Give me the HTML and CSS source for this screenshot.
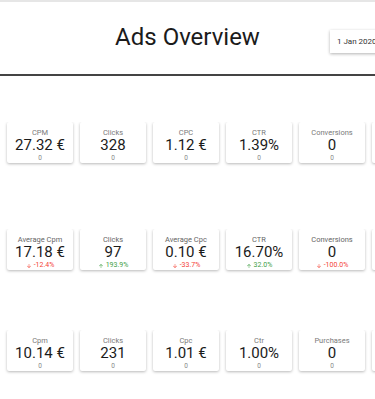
FILE: index.html
```html
<!DOCTYPE html>
<html lang="en">
<head>
    <meta charset="UTF-8">
    <meta name="viewport" content="width=device-width, initial-scale=1.0">
    <title>Ads Overview</title>
    <link rel="stylesheet" href="styles.css">
</head>
<body>
    <div class="header">
        <div></div>
        <h1 class="title">Ads Overview</h1>
        <div class="datecol">
            <div class="datebox">1 Jan 2020</div>
        </div>
    </div>

    <!-- 总览 -->
    <div class="row first">
        <div class="card"><span class="label">CPM</span><span class="value">27.32 €</span><span class="sub">0</span></div>
        <div class="card"><span class="label">Clicks</span><span class="value">328</span><span class="sub">0</span></div>
        <div class="card"><span class="label">CPC</span><span class="value">1.12 €</span><span class="sub">0</span></div>
        <div class="card"><span class="label">CTR</span><span class="value">1.39%</span><span class="sub">0</span></div>
        <div class="card"><span class="label">Conversions</span><span class="value">0</span><span class="sub">0</span></div>
        <div class="card"></div>
    </div>

    <!-- 对比 -->
    <div class="row second">
        <div class="card"><span class="label">Average Cpm</span><span class="value">17.18 €</span><span class="sub down"><svg viewBox="0 0 24 24"><path d="M20 12l-1.41-1.41L13 16.17V4h-2v12.17l-5.58-5.59L4 12l8 8 8-8z"/></svg>-12.4%</span></div>
        <div class="card"><span class="label">Clicks</span><span class="value">97</span><span class="sub up"><svg viewBox="0 0 24 24"><path d="M4 12l1.41 1.41L11 7.83V20h2V7.83l5.58 5.59L20 12l-8-8-8 8z"/></svg>193.9%</span></div>
        <div class="card"><span class="label">Average Cpc</span><span class="value">0.10 €</span><span class="sub down"><svg viewBox="0 0 24 24"><path d="M20 12l-1.41-1.41L13 16.17V4h-2v12.17l-5.58-5.59L4 12l8 8 8-8z"/></svg>-33.7%</span></div>
        <div class="card"><span class="label">CTR</span><span class="value">16.70%</span><span class="sub up"><svg viewBox="0 0 24 24"><path d="M4 12l1.41 1.41L11 7.83V20h2V7.83l5.58 5.59L20 12l-8-8-8 8z"/></svg>32.0%</span></div>
        <div class="card"><span class="label">Conversions</span><span class="value">0</span><span class="sub down"><svg viewBox="0 0 24 24"><path d="M20 12l-1.41-1.41L13 16.17V4h-2v12.17l-5.58-5.59L4 12l8 8 8-8z"/></svg>-100.0%</span></div>
        <div class="card"></div>
    </div>

    <!-- 明细 -->
    <div class="row third">
        <div class="card"><span class="label">Cpm</span><span class="value">10.14 €</span><span class="sub">0</span></div>
        <div class="card"><span class="label">Clicks</span><span class="value">231</span><span class="sub">0</span></div>
        <div class="card"><span class="label">Cpc</span><span class="value">1.01 €</span><span class="sub">0</span></div>
        <div class="card"><span class="label">Ctr</span><span class="value">1.00%</span><span class="sub">0</span></div>
        <div class="card"><span class="label">Purchases</span><span class="value">0</span><span class="sub">0</span></div>
        <div class="card"></div>
    </div>
</body>
</html>
```

FILE: styles.css
```css
/* 页面基础 */
body{
    margin: 0;
    font-family: Roboto, "Liberation Sans", sans-serif;
    background: #fff;
    color: #212121;
    overflow: hidden;
}
/* 顶部标题栏 */
.header{
    display: grid;
    grid-template-columns: minmax(0, 1fr) auto minmax(0, 1fr);
    align-items: center;
    height: 72px;
    border-top: 2px solid #e6e6e6;
    border-bottom: 2px solid #444;
    overflow: hidden;
}
.title{
    margin: 0;
    font-size: 24px;
    font-weight: 400;
    line-height: 30px;
    color: #1b1b1b;
    margin-top: -2px;
}
/* 日期选择框 */
.datecol{
    min-width: 0;
}
.datebox{
    width: 60px;
    margin-left: 70px;
    margin-top: 6px;
    height: 23px;
    line-height: 23px;
    padding: 0 7px;
    font-size: 8px;
    color: #333;
    white-space: nowrap;
    background: #fff;
    box-shadow: 0 1px 3px rgba(0,0,0,0.3);
}
/* 卡片行 */
.row{
    display: flex;
    gap: 7px;
    padding-left: 7px;
    overflow: hidden;
    padding-bottom: 4px;
}
.first{
    margin-top: 46px;
}
.second{
    margin-top: 62px;
}
.third{
    margin-top: 56px;
}
/* 单个卡片 */
.card{
    flex: 0 0 66px;
    height: 41px;
    padding-top: 6px;
    box-sizing: border-box;
    background: #fff;
    border-radius: 2px;
    box-shadow: 0 1px 3px rgba(0,0,0,0.28);
    text-align: center;
    display: flex;
    flex-direction: column;
}
.label{
    font-size: 7.5px;
    line-height: 9px;
    color: #7a7a7a;
    white-space: nowrap;
}
.second .label{
    color: #666;
}
.value{
    font-size: 15px;
    line-height: 17px;
    color: #1b1b1b;
    white-space: nowrap;
}
.sub{
    font-size: 6.5px;
    line-height: 9px;
    color: #888;
    white-space: nowrap;
    display: flex;
    justify-content: center;
    align-items: center;
    gap: 2px;
}
.sub svg{
    width: 6px;
    height: 6px;
    fill: currentColor;
}
.down{
    color: #f44336;
    font-size: 7px;
}
.up{
    color: #43a047;
    font-size: 7px;
}
```
